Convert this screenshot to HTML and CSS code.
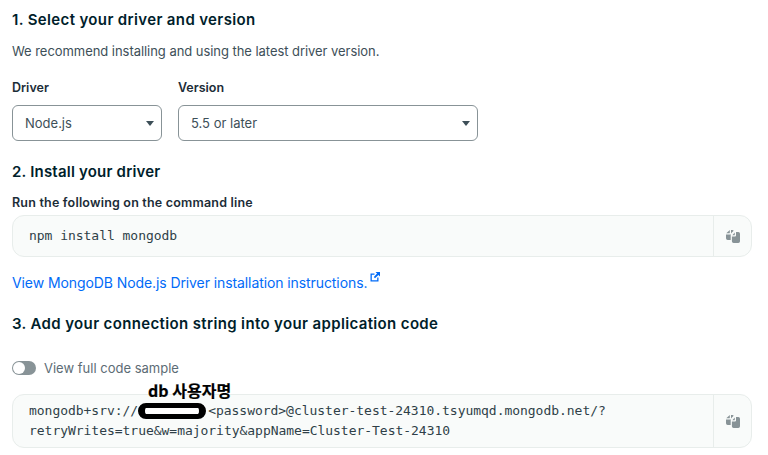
FILE: index.html
```html
<!DOCTYPE html>
<html lang="en">
<head>
<meta charset="utf-8">
<title>Connect</title>
<link rel="stylesheet" href="styles.css">
</head>
<body>
<main class="page">
  <h2 class="step-title first">1. Select your driver and version</h2>
  <p class="intro">We recommend installing and using the latest driver version.</p>
  <div class="selects">
    <div class="field driver">
      <div class="label">Driver</div>
      <div class="select"><span>Node.js</span><i class="caret"></i></div>
    </div>
    <div class="field version">
      <div class="label">Version</div>
      <div class="select"><span>5.5 or later</span><i class="caret"></i></div>
    </div>
  </div>
  <h2 class="step-title second">2. Install your driver</h2>
  <div class="label cmd-label">Run the following on the command line</div>
  <div class="code single">
    <pre class="code-text">npm install mongodb</pre>
    <div class="copy">
      <svg class="copy-icon" viewBox="0 0 16 16"><path d="M1 6.5H5A1 1 0 0 0 6 5.5V2H7.3A1.7 1.7 0 0 1 8.7 2.7L6.4 5A2.4 2.4 0 0 0 5.7 6.8V12H2.7A1.7 1.7 0 0 1 1 10.3Z"/><path d="M1.3 5.3 4.8 2V4.7A.6.6 0 0 1 4.2 5.3Z"/><path d="M6.9 8.5H10A1 1 0 0 0 11 7.5V4H13.3A1.7 1.7 0 0 1 15 5.7V13.3A1.7 1.7 0 0 1 13.3 15H8.6A1.7 1.7 0 0 1 6.9 13.3Z"/><path d="M7.3 7.3 9.8 4.4V6.7A.6.6 0 0 1 9.2 7.3Z"/></svg>
    </div>
  </div>
  <a class="doc-link" href="#">View MongoDB Node.js Driver installation instructions.<svg class="ext" viewBox="0 0 12 12"><path d="M1.5 2.5h4v1.3H2.8v5.4h5.4V6.5h1.3v4H1.5Z"/><path d="M6.5 1h4.5v4.5L9.4 3.9 6 7.2 4.8 6 8.1 2.6Z"/></svg></a>
  <h2 class="step-title third">3. Add your connection string into your application code</h2>
  <div class="toggle-row">
    <span class="toggle"><i class="knob"></i></span>
    <span class="toggle-label">View full code sample</span>
  </div>
  <div class="code double">
    <pre class="code-text">mongodb+srv://<span class="redact"></span>&lt;password&gt;@cluster-test-24310.tsyumqd.mongodb.net/?
retryWrites=true&amp;w=majority&amp;appName=Cluster-Test-24310</pre>
    <div class="copy">
      <svg class="copy-icon" viewBox="0 0 16 16"><path d="M1 6.5H5A1 1 0 0 0 6 5.5V2H7.3A1.7 1.7 0 0 1 8.7 2.7L6.4 5A2.4 2.4 0 0 0 5.7 6.8V12H2.7A1.7 1.7 0 0 1 1 10.3Z"/><path d="M1.3 5.3 4.8 2V4.7A.6.6 0 0 1 4.2 5.3Z"/><path d="M6.9 8.5H10A1 1 0 0 0 11 7.5V4H13.3A1.7 1.7 0 0 1 15 5.7V13.3A1.7 1.7 0 0 1 13.3 15H8.6A1.7 1.7 0 0 1 6.9 13.3Z"/><path d="M7.3 7.3 9.8 4.4V6.7A.6.6 0 0 1 9.2 7.3Z"/></svg>
    </div>
    <span class="annotation">db 사용자명</span>
  </div>
</main>
</body>
</html>
```
FILE: styles.css
```css
* { box-sizing: border-box; }
html, body { margin: 0; padding: 0; background: #fff; }
body { width: 768px; height: 455px; overflow: hidden; font-family: Inter, "Noto Sans", sans-serif; color: #001e2b; }
.page { padding: 0 16px 0 12px; }
.step-title { margin: 0; font-size: 15px; line-height: 20px; font-weight: 600; color: #001e2b; letter-spacing: .36px; }
.step-title.first { padding-top: 10px; }
.step-title.second { letter-spacing: .2px; }
.intro { margin: 11px 0 0; font-size: 13px; line-height: 20px; color: #3d4f58; letter-spacing: -.05px; }
.selects { display: flex; gap: 16px; margin-top: 17px; }
.label { font-size: 12.5px; line-height: 20px; font-weight: 600; color: #1c2d38; }
.driver { width: 150px; }
.version { width: 300px; }
.select { margin-top: 7px; height: 36px; border: 1px solid #889397; border-radius: 6px; display: flex; align-items: center; justify-content: space-between; padding: 0 7px 0 12px; font-size: 13px; color: #3d4f58; }
.caret { width: 0; height: 0; border-left: 4px solid transparent; border-right: 4px solid transparent; border-top: 5px solid #3d4f58; }
.step-title.second { margin-top: 21px; }
.cmd-label { margin-top: 12px; line-height: 18px; letter-spacing: .2px; }
.code { position: relative; display: flex; background: #f9fbfa; border: 1px solid #e8edeb; border-radius: 12px; }
.single { height: 42px; margin-top: 3px; }
.double { height: 54px; margin-top: 16px; }
.code-text { margin: 0; flex: 1; padding: 0 16px; font-family: "DejaVu Sans Mono", monospace; font-size: 13px; line-height: 20px; color: #2f3f48; align-self: center; letter-spacing: -.03px; }
.copy { width: 38px; border-left: 1px solid #e8edeb; display: flex; align-items: center; justify-content: center; flex: none; }
.copy-icon { width: 16px; height: 16px; fill: #889397; }
.doc-link { display: block; margin-top: 14px; font-size: 14px; line-height: 20px; color: #016bf8; text-decoration: none; letter-spacing: -.09px; }
.ext { width: 12px; height: 12px; fill: #016bf8; vertical-align: 5px; margin-left: 2px; }
.step-title.third { margin-top: 21px; }
.toggle-row { display: flex; align-items: center; gap: 8px; margin-top: 24px; }
.toggle { width: 24px; height: 14px; border-radius: 7px; background: #889397; position: relative; display: block; }
.knob { position: absolute; left: 1px; top: 1px; width: 12px; height: 12px; border-radius: 50%; background: #fff; }
.toggle-label { font-size: 13px; line-height: 20px; color: #5c6c75; }
.redact { display: inline-block; width: 68px; height: 16px; vertical-align: -4px; border-style: solid; border-color: #000; border-width: 5px 7px; border-radius: 8px; background: #fff; margin-right: 2px; }
.annotation { position: absolute; left: 135px; top: -15px; font-family: "Noto Sans CJK KR", "Liberation Sans", sans-serif; font-size: 16px; font-weight: 700; line-height: 20px; color: #000; white-space: nowrap; -webkit-text-stroke: .2px #000; }
```
